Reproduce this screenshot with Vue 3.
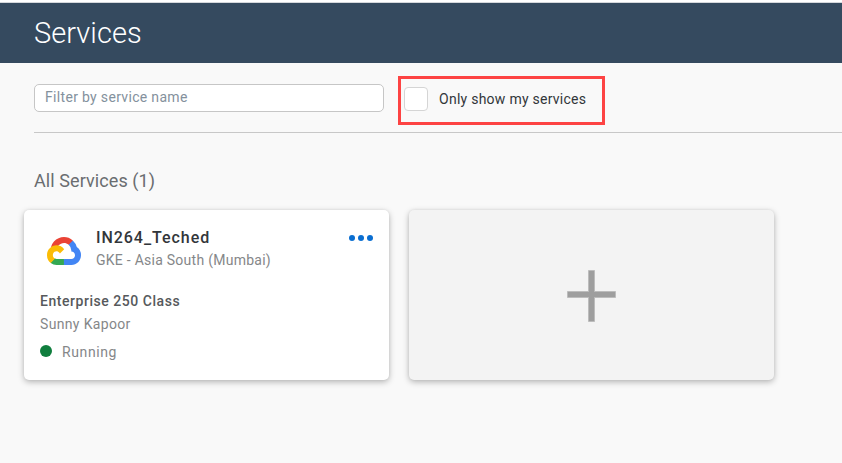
<script setup>
import { ref } from 'vue'

const filter = ref('')
const onlyMine = ref(false)
const services = [
  { name: 'IN264_Teched', location: 'GKE - Asia South (Mumbai)', plan: 'Enterprise 250 Class', owner: 'Sunny Kapoor', status: 'Running' },
]
</script>

<template>
  <div class="page">
    <header class="topbar"><h1><span class="t-title">Services</span></h1></header>
    <main>
      <div class="toolbar">
        <input v-model="filter" class="filter" type="text" placeholder="Filter by service name" />
        <label class="mine">
          <input v-model="onlyMine" type="checkbox" class="box" />
          <span class="t-mine">Only show my services</span>
        </label>
      </div>
      <h2><span class="t-all">All Services ({{ services.length }})</span></h2>
      <div class="cards">
        <article v-for="s in services" :key="s.name" class="card">
          <div class="head">
            <svg class="cloud" viewBox="0 0 256 206" preserveAspectRatio="none">
              <path fill="#ea4335" d="M170.252 56.819l22.253-22.253 1.483-9.37C153.437-11.677 88.976-7.496 52.42 33.92 42.267 45.423 34.734 59.764 30.717 74.573l7.97-1.123 44.505-7.34 3.436-3.513c19.797-21.742 53.27-24.667 76.128-6.168z" />
              <path fill="#4285f4" d="M224.205 73.918a100.249 100.249 0 0 0-30.217-48.722l-31.232 31.232a55.515 55.515 0 0 1 20.379 44.037v5.544c15.35 0 27.797 12.445 27.797 27.796s-12.446 27.485-27.797 27.485h-55.671l-5.466 5.934v33.34l5.466 5.231h55.67c39.93.311 72.553-31.494 72.864-71.424a72.303 72.303 0 0 0-31.793-60.453" />
              <path fill="#34a853" d="M71.87 205.796h55.593V161.29H71.87a27.275 27.275 0 0 1-11.4-2.498l-7.887 2.42-22.409 22.253-1.952 7.574a72.063 72.063 0 0 0 43.648 14.757" />
              <path fill="#fbbc05" d="M71.87 61.425C31.94 61.664-.237 94.228.001 134.158a72.301 72.301 0 0 0 28.222 56.88l32.248-32.246c-13.99-6.322-20.208-22.786-13.887-36.776 6.32-13.99 22.786-20.208 36.775-13.888a27.796 27.796 0 0 1 13.887 13.888l32.248-32.248A72.224 72.224 0 0 0 71.87 61.425" />
            </svg>
            <div class="names">
              <h3><span class="t-name">{{ s.name }}</span></h3>
              <p><span class="t-loc">{{ s.location }}</span></p>
            </div>
            <div class="more"><i></i><i></i><i></i></div>
          </div>
          <p class="plan"><span class="t-plan">{{ s.plan }}</span></p>
          <p class="owner"><span class="t-owner">{{ s.owner }}</span></p>
          <p class="status"><i class="dot"></i><span class="t-status">{{ s.status }}</span></p>
        </article>
        <div class="card add">
          <svg width="49" height="52" viewBox="0 0 49 52">
            <path d="M21.5.5h6v21h21v6h-21v24h-6v-24H.5v-6h21z" fill="#9e9e9e" stroke="#bcbcbc" />
          </svg>
        </div>
      </div>
    </main>
  </div>
</template>

<style>
body { background: #f9f9f9; }
</style>

<style scoped>
.page { min-height: 463px; box-sizing: border-box; overflow: hidden; background: #f9f9f9; border-top: 2px solid #fff; font-family: Roboto, "Liberation Sans", sans-serif; }
h1, h2, h3, p { margin: 0; font-weight: 400; white-space: nowrap; }
.topbar { height: 61px; box-sizing: border-box; border-top: 1px solid #d5d8dc; background: #354a5f; padding-left: 34px; color: #fff; }
h1 { font-size: 29px; font-weight: 300; line-height: 60px; }
.t-title { letter-spacing: 0.05px; }
.toolbar { display: flex; align-items: flex-start; gap: 14px; height: 70px; margin-left: 34px; padding-top: 13px; box-sizing: border-box; border-bottom: 1px solid #c8c8c8; }
.filter { width: 350px; height: 28px; margin: 8px 0 0; box-sizing: border-box; border: 1px solid #c6c6c6; border-radius: 5px; background: #fff; padding: 0 10px 2px; font: 14px Roboto, sans-serif; letter-spacing: 0.32px; outline: none; }
.filter::placeholder { color: #84919d; opacity: 1; }
.mine { display: flex; align-items: center; width: 207px; height: 49px; box-sizing: border-box; border: 3px solid #fd4343; padding: 0 0 3px 3px; gap: 11px; font-size: 14px; color: #32363a; white-space: nowrap; }
.box { appearance: none; width: 24px; height: 24px; margin: 0; border: 1px solid #d5d5d5; border-radius: 4px; background: #fff; }
.t-mine { letter-spacing: 0.26px; }
h2 { padding: 35px 0 0 34px; font-size: 18px; line-height: 26px; color: #6a6d70; }
.t-all { letter-spacing: 0.08px; }
.cards { display: flex; gap: 20px; padding: 16px 0 0 24px; }
.card { width: 365px; height: 170px; box-sizing: border-box; border-radius: 5px; background: #fff; padding: 17px 16px; box-shadow: 0 2px 6px rgba(0, 0, 0, 0.28), 0 0 3px rgba(0, 0, 0, 0.06); }
.add { display: flex; justify-content: center; align-items: center; background: #f3f3f3; padding: 2px 0 0; }
.head { display: flex; height: 62px; }
.cloud { width: 34px; height: 28px; margin: 10px 15px 0 7px; flex: none; }
.names { flex: 1; }
h3 { font-size: 16px; font-weight: 500; line-height: 22px; color: #32363a; }
.t-name { letter-spacing: 0.95px; }
.names p { font-size: 14px; line-height: 22px; color: #858789; }
.t-loc { letter-spacing: 0.26px; }
.more { display: flex; gap: 3px; padding-top: 8px; }
.more i { width: 6px; height: 6px; border-radius: 50%; background: #0a6ed1; }
.plan { font-size: 14px; font-weight: 500; line-height: 24px; color: #56595c; }
.t-plan { letter-spacing: 0.54px; }
.owner { font-size: 14px; line-height: 22px; color: #858789; }
.t-owner { letter-spacing: 0.34px; }
.status { display: flex; align-items: center; gap: 10px; margin-top: 5px; height: 24px; font-size: 14px; line-height: 24px; color: #858789; }
.t-status { letter-spacing: 0.6px; }
.dot { width: 12px; height: 12px; margin-top: -3px; border-radius: 50%; background: #107e3e; }
</style>
